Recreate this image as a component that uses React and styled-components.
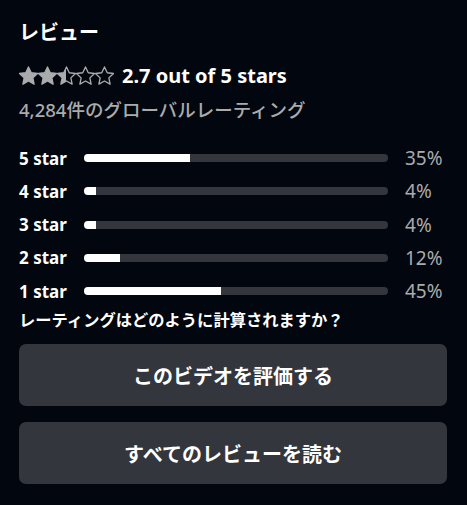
import styled, { createGlobalStyle } from 'styled-components';

const GlobalStyle = createGlobalStyle`
  body {
    margin: 0;
    background: #02060e;
    font-family: 'Noto Sans', 'Noto Sans CJK JP', sans-serif;
  }
`;

const ratings = [
  { label: '5 star', pct: 35 },
  { label: '4 star', pct: 4 },
  { label: '3 star', pct: 4 },
  { label: '2 star', pct: 12 },
  { label: '1 star', pct: 45 },
];

const STAR = 'M12 2.5l2.9 6.1 6.6.8-4.9 4.6 1.3 6.6L12 17.3l-5.9 3.3 1.3-6.6-4.9-4.6 6.6-.8z';

function Star({ fill }) {
  const id = `half-${fill}`;
  return (
    <svg width="19" height="19" viewBox="2 1.5 20 20">
      <defs>
        <linearGradient id={id}>
          <stop offset={`${fill}%`} stopColor="#aaabad" />
          <stop offset={`${fill}%`} stopColor="transparent" />
        </linearGradient>
      </defs>
      <path d={STAR} fill={`url(#${id})`} stroke="#aaabad" strokeWidth="1.4" strokeLinejoin="round" />
    </svg>
  );
}

export default function App() {
  const stars = [100, 100, 50, 0, 0];
  return (
    <>
      <GlobalStyle />
      <Container>
        <Title>レビュー</Title>
        <RatingLine>
          <Stars>
            {stars.map((f, i) => <Star key={i} fill={f} />)}
          </Stars>
          <Score>2.7 out of 5 stars</Score>
        </RatingLine>
        <Global>4,284件のグローバルレーティング</Global>

        <Bars>
          {ratings.map(r => (
            <BarRow key={r.label}>
              <Label>{r.label}</Label>
              <Track>
                <Fill style={{ width: `${r.pct}%` }} />
              </Track>
              <Pct>{r.pct}%</Pct>
            </BarRow>
          ))}
        </Bars>

        <Question>レーティングはどのように計算されますか？</Question>

        <Button>このビデオを評価する</Button>
        <Button>すべてのレビューを読む</Button>
      </Container>
    </>
  );
}

const Container = styled.div`
  display: flex;
  flex-direction: column;
  padding: 19px 20px 21px 19px;
  color: #ffffff;
`;

const Title = styled.h1`
  margin: 0;
  font-size: 20px;
  line-height: 28px;
  font-weight: 700;
`;

const RatingLine = styled.div`
  display: flex;
  align-items: center;
  margin-top: 14px;
  height: 28px;
`;

const Stars = styled.div`
  display: flex;
  margin-right: 8px;
`;

const Score = styled.span`
  font-size: 20px;
  font-weight: 700;
`;

const Global = styled.p`
  margin: 8px 0 0 0;
  font-size: 18.5px;
  line-height: 26px;
  font-weight: 500;
  color: #aaabad;
`;

const Bars = styled.div`
  display: flex;
  flex-direction: column;
  margin-top: 22px;
  gap: 7.25px;
`;

const BarRow = styled.div`
  display: grid;
  grid-template-columns: 48px 1fr 42px;
  column-gap: 17px;
  align-items: center;
  height: 26px;
`;

const Label = styled.span`
  font-size: 17px;
  font-weight: 700;
  white-space: nowrap;
`;

const Track = styled.div`
  height: 8px;
  border-radius: 4px;
  background: #33363d;
  overflow: hidden;
`;

const Fill = styled.div`
  height: 100%;
  background: #ffffff;
`;

const Pct = styled.span`
  font-size: 19px;
  color: #aaabad;
`;

const Question = styled.p`
  margin: 4px 0 0 0;
  font-size: 16.3px;
  line-height: 24px;
  font-weight: 700;
`;

const Button = styled.button`
  display: flex;
  align-items: center;
  justify-content: center;
  height: 62px;
  margin-top: 16px;
  border: none;
  border-radius: 7px;
  background: #33363d;
  color: #ffffff;
  font-family: 'Noto Sans', 'Noto Sans CJK JP', sans-serif;
  font-size: 20px;
  font-weight: 700;

  &:first-of-type {
    margin-top: 12px;
  }
`;
